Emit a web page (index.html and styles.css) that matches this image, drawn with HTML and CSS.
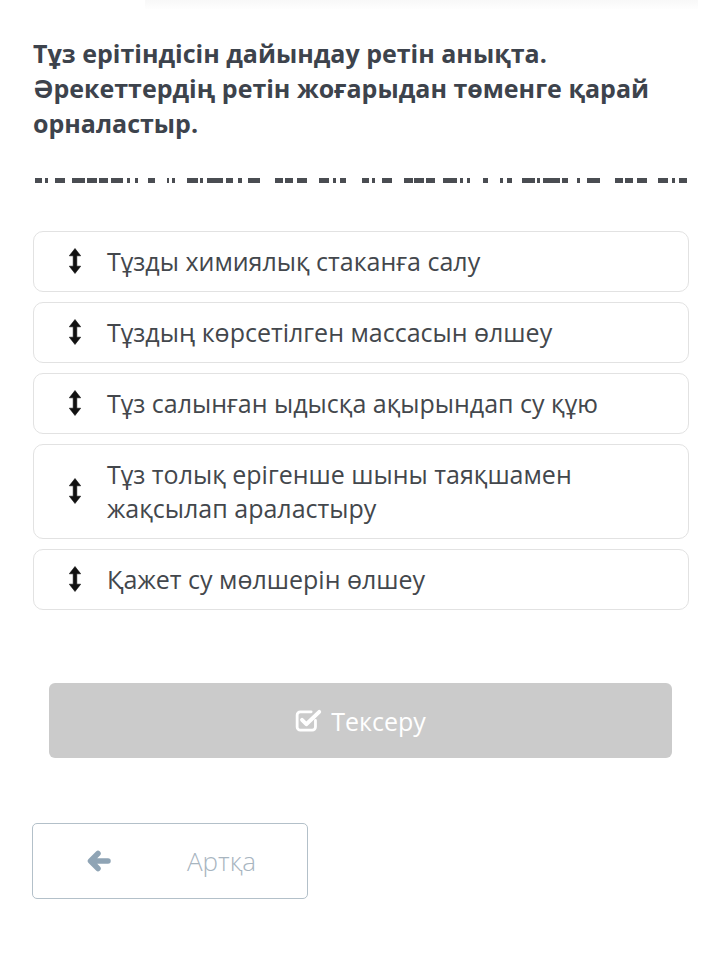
FILE: index.html
```html
<!DOCTYPE html>
<html lang="kk">
<head>
<meta charset="utf-8">
<title>Тұз ерітіндісі</title>
<link rel="stylesheet" href="styles.css">
</head>
<body>
<div class="topbar"></div>
<main class="page">
  <h1 class="title">Тұз ерітіндісін дайындау ретін анықта. Әрекеттердің ретін жоғарыдан төменге қарай орналастыр.</h1>

  <svg class="dashes" width="655" height="6" viewBox="0 0 655 6" aria-hidden="true">
    <g fill="#4a4d52">
      <rect x="0" y="0" width="7" height="5"/><rect x="10" y="0" width="3" height="5"/><rect x="20" y="0" width="10" height="5"/><rect x="37" y="0" width="13" height="5"/><rect x="52" y="0" width="10" height="5"/><rect x="64" y="0" width="9" height="5"/><rect x="76" y="0" width="12" height="5"/><rect x="92" y="0" width="3" height="5"/><rect x="100" y="0" width="3" height="5"/><rect x="113" y="0" width="7" height="5"/><rect x="132" y="0" width="2" height="5"/><rect x="137" y="0" width="3" height="5"/><rect x="152" y="0" width="11" height="5"/><rect x="165" y="0" width="3" height="5"/><rect x="172" y="0" width="16" height="5"/><rect x="191" y="0" width="7" height="5"/><rect x="203" y="0" width="4" height="5"/><rect x="213" y="0" width="12" height="5"/><rect x="240" y="0" width="8" height="5"/><rect x="250" y="0" width="8" height="5"/><rect x="262" y="0" width="10" height="5"/><rect x="284" y="0" width="10" height="5"/><rect x="298" y="0" width="3" height="5"/><rect x="305" y="0" width="6" height="5"/>
      <rect x="327" y="0" width="7" height="5"/><rect x="337" y="0" width="3" height="5"/><rect x="347" y="0" width="10" height="5"/><rect x="369" y="0" width="9" height="5"/><rect x="379" y="0" width="10" height="5"/><rect x="391" y="0" width="9" height="5"/><rect x="408" y="0" width="14" height="5"/><rect x="425" y="0" width="3" height="5"/><rect x="432" y="0" width="3" height="5"/><rect x="448" y="0" width="5" height="5"/><rect x="465" y="0" width="3" height="5"/><rect x="472" y="0" width="5" height="5"/><rect x="487" y="0" width="13" height="5"/><rect x="502" y="0" width="3" height="5"/><rect x="508" y="0" width="17" height="5"/><rect x="527" y="0" width="6" height="5"/><rect x="542" y="0" width="3" height="5"/><rect x="552" y="0" width="13" height="5"/><rect x="580" y="0" width="8" height="5"/><rect x="590" y="0" width="8" height="5"/><rect x="602" y="0" width="10" height="5"/><rect x="623" y="0" width="10" height="5"/><rect x="637" y="0" width="3" height="5"/><rect x="644" y="0" width="8" height="5"/>
    </g>
  </svg>

  <ul class="options">
    <li class="option">
      <svg class="drag" width="12" height="26" viewBox="0 0 12 26" aria-hidden="true"><path d="M6 0.5 L11.7 7.8 L7.8 7.8 L7.8 18.2 L11.7 18.2 L6 25.5 L0.3 18.2 L4.2 18.2 L4.2 7.8 L0.3 7.8 Z" fill="#111" stroke="#111" stroke-width="0.6" stroke-linejoin="round"/></svg>
      <span class="option-text">Тұзды химиялық стаканға салу</span>
    </li>
    <li class="option">
      <svg class="drag" width="12" height="26" viewBox="0 0 12 26" aria-hidden="true"><path d="M6 0.5 L11.7 7.8 L7.8 7.8 L7.8 18.2 L11.7 18.2 L6 25.5 L0.3 18.2 L4.2 18.2 L4.2 7.8 L0.3 7.8 Z" fill="#111" stroke="#111" stroke-width="0.6" stroke-linejoin="round"/></svg>
      <span class="option-text">Тұздың көрсетілген массасын өлшеу</span>
    </li>
    <li class="option">
      <svg class="drag" width="12" height="26" viewBox="0 0 12 26" aria-hidden="true"><path d="M6 0.5 L11.7 7.8 L7.8 7.8 L7.8 18.2 L11.7 18.2 L6 25.5 L0.3 18.2 L4.2 18.2 L4.2 7.8 L0.3 7.8 Z" fill="#111" stroke="#111" stroke-width="0.6" stroke-linejoin="round"/></svg>
      <span class="option-text">Тұз салынған ыдысқа ақырындап су құю</span>
    </li>
    <li class="option">
      <svg class="drag" width="12" height="26" viewBox="0 0 12 26" aria-hidden="true"><path d="M6 0.5 L11.7 7.8 L7.8 7.8 L7.8 18.2 L11.7 18.2 L6 25.5 L0.3 18.2 L4.2 18.2 L4.2 7.8 L0.3 7.8 Z" fill="#111" stroke="#111" stroke-width="0.6" stroke-linejoin="round"/></svg>
      <span class="option-text">Тұз толық ерігенше шыны таяқшамен жақсылап араластыру</span>
    </li>
    <li class="option">
      <svg class="drag" width="12" height="26" viewBox="0 0 12 26" aria-hidden="true"><path d="M6 0.5 L11.7 7.8 L7.8 7.8 L7.8 18.2 L11.7 18.2 L6 25.5 L0.3 18.2 L4.2 18.2 L4.2 7.8 L0.3 7.8 Z" fill="#111" stroke="#111" stroke-width="0.6" stroke-linejoin="round"/></svg>
      <span class="option-text">Қажет су мөлшерін өлшеу</span>
    </li>
  </ul>

  <div class="check-row">
    <button class="check-btn" type="button">
      <svg class="check-icon" width="28" height="26" viewBox="0 0 26 24" aria-hidden="true">
        <path d="M19 11.5 V17.5 A3 3 0 0 1 16 20.5 H5 A3 3 0 0 1 2 17.5 V6.5 A3 3 0 0 1 5 3.5 H15" fill="none" stroke="#fff" stroke-width="2.6" stroke-linecap="round"/>
        <path d="M6.5 11 L10.5 15 L22.5 3.5" fill="none" stroke="#fff" stroke-width="3.6" stroke-linecap="round" stroke-linejoin="round"/>
      </svg>
      <span>Тексеру</span>
    </button>
  </div>

  <button class="back-btn" type="button">
    <svg class="back-icon" width="26" height="22" viewBox="0 0 26 22" aria-hidden="true">
      <path d="M22 11 H5 M12 3.5 L4.5 11 L12 18.5" fill="none" stroke="#8fa4b5" stroke-width="5.5" stroke-linecap="round" stroke-linejoin="round"/>
    </svg>
    <span class="back-text">Артқа</span>
  </button>
</main>
</body>
</html>
```

FILE: styles.css
```css
* {
  box-sizing: border-box;
}

html, body {
  margin: 0;
  padding: 0;
  background: #ffffff;
}

body {
  font-family: "Open Sans", "Noto Sans", "DejaVu Sans", sans-serif;
  width: 720px;
  height: 959px;
  overflow: hidden;
}

.topbar {
  height: 9px;
  margin: 0 22px 0 145px;
  background: linear-gradient(#f8f8f8, #fefefe);
}

.page {
  padding: 0 31px 0 33px;
}

.title {
  margin: 27px 0 0 0;
  font-size: 25px;
  line-height: 35px;
  font-weight: 700;
  color: #3d434c;
}

.dashes {
  display: block;
  margin: 37px 0 0 2px;
}

.options {
  list-style: none;
  margin: 47px 0 0 0;
  padding: 0;
  display: flex;
  flex-direction: column;
  gap: 10px;
}

.option {
  display: flex;
  align-items: center;
  gap: 26px;
  min-height: 61px;
  padding: 12px 20px 13px 35px;
  border: 1px solid #e2e2e2;
  border-radius: 10px;
  background: #ffffff;
}

.drag {
  flex: none;
}

.option-text {
  font-size: 25px;
  line-height: 34px;
  color: #43474c;
}

.check-row {
  margin-top: 73px;
  padding: 0 17px 0 16px;
}

.check-btn {
  width: 100%;
  height: 75px;
  border: none;
  border-radius: 6px;
  background: #cbcbcb;
  color: #ffffff;
  font-family: inherit;
  font-size: 25px;
  display: flex;
  align-items: center;
  justify-content: center;
  gap: 8px;
  padding: 0;
}

.check-icon {
  flex: none;
}

.back-btn {
  margin: 65px 0 0 -1px;
  width: 276px;
  height: 76px;
  border: 1px solid #b3c0c9;
  border-radius: 5px;
  background: #ffffff;
  display: flex;
  align-items: center;
  padding: 0 0 0 53px;
  font-family: inherit;
}

.back-icon {
  flex: none;
}

.back-text {
  margin-left: 75px;
  font-size: 26px;
  font-weight: 300;
  color: #a8b5bf;
}
```
